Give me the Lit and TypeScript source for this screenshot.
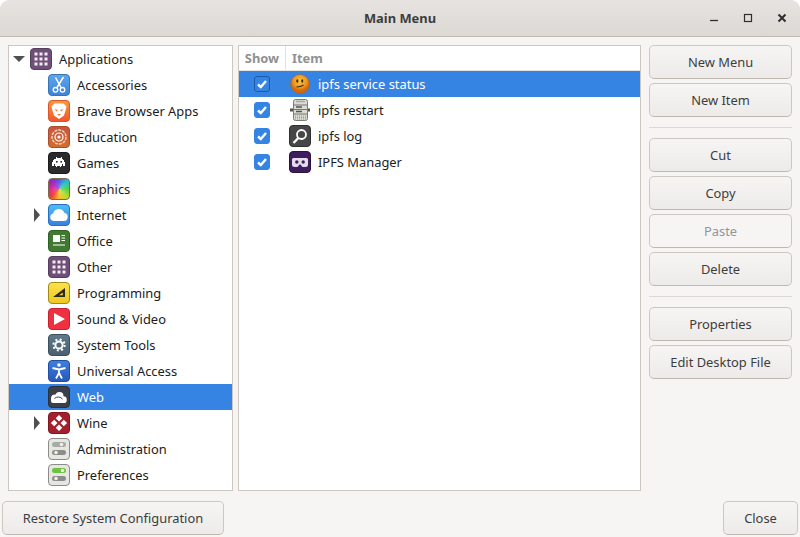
import {LitElement, html, css, svg} from 'lit';
import {customElement} from 'lit/decorators.js';

const grid = (fill: string) => {
  const cells = [];
  for (const y of [4.5, 9.5, 14.5]) for (const x of [4.5, 9.5, 14.5]) cells.push(svg`<rect x=${x} y=${y} width="3" height="3" fill=${fill}/>`);
  return cells;
};

// rounded tile shared by the category icons
const tile = (fill: string, border: string, inner: unknown) => html`<svg class="icon" viewBox="0 0 22 22">
  <rect x=".5" y=".5" width="21" height="21" rx="3.5" fill=${fill} stroke=${border}/>
  ${inner}
</svg>`;

const icons: Record<string, unknown> = {
  applications: tile('#6f4e78', '#54405c', grid('#f2edf3')),
  accessories: tile('url(#acc)', '#3a74b4', svg`
    <path d="M15.500 3 9 13.500M7.500 3.500 13 13.500" stroke="#fff" stroke-width="1.500" fill="none"/>
    <circle cx="7.500" cy="15.800" r="2.300" fill="none" stroke="#fff" stroke-width="1.300"/>
    <circle cx="14.500" cy="15.800" r="2.300" fill="none" stroke="#fff" stroke-width="1.300"/>`),
  brave: tile('url(#brv)', '#d9572a', svg`
    <path d="M6.500 3.500h9l3 3-1 4-1.500 5L11 19l-5-3.500-1.500-5-1-4z" fill="#fff"/>
    <path d="M6.500 9 10 10 8.500 11.500zM15.500 9 12 10l1.500 1.500zM9 14h4l-2 2z" fill="#f47a3a"/>`),
  education: tile('url(#edu)', '#a84f2c', svg`
    <circle cx="11" cy="11" r="7" fill="none" stroke="#f5d9cc" stroke-width="1.400" stroke-dasharray="3 1"/>
    <circle cx="11" cy="11" r="4" fill="none" stroke="#fff" stroke-width="1.200"/>
    <circle cx="11" cy="11" r="1.600" fill="#fff"/>`),
  games: tile('#2b2b2b', '#1c1c1c', svg`
    <path d="M8 5h1v1h4V5h1v2h1v1h1v2h1v4h-2v-2h-1v2h-1v1h-1v-1H9v1H8v-1H7v-2H6v2H4v-4h1V8h1V7h2z" fill="#fff"/>
    <rect x="8" y="9" width="1.600" height="1.600" fill="#2b2b2b"/><rect x="12.400" y="9" width="1.600" height="1.600" fill="#2b2b2b"/>`),
  graphics: html`<div class="icon graphics"></div>`,
  internet: tile('url(#net)', '#2a6fc4', svg`
    <path d="M6 17a3.800 3.800 0 0 1-.8-7.500 5.800 5.800 0 0 1 11-.8A4.200 4.200 0 0 1 16 17z" fill="#fff"/>`),
  office: tile('#3f7a30', '#2f5f24', svg`
    <rect x="5" y="5" width="7" height="7" fill="#fff"/>
    <path d="M13.500 5.500H17M13.500 8H17M13.500 10.500H17M5 15h12" stroke="#fff" stroke-width="1.200"/>`),
  other: tile('#6f4e78', '#54405c', grid('#f2edf3')),
  programming: tile('url(#prg)', '#a08a18', svg`
    <path d="M17 6v9H5z M14.800 10.600 11 13.200h3.800z" fill="#2b2a20" fill-rule="evenodd"/>`),
  sound: tile('#ee3040', '#c5222f', svg`<path d="M6 5 17 11 6 17z" fill="#fff"/>`),
  system: tile('url(#sys)', '#3d4f5c', svg`
    <circle cx="11" cy="11" r="3.600" fill="none" stroke="#fff" stroke-width="2"/>
    <circle cx="11" cy="11" r="5.600" fill="none" stroke="#fff" stroke-width="2" stroke-dasharray="2 2.400"/>`),
  universal: tile('url(#uni)', '#1f4fa0', svg`
    <circle cx="11" cy="5" r="1.800" fill="#fff"/>
    <path d="M4.500 8 11 9.500 17.500 8M11 9.500v3.500M11 13l-3 5.500M11 13l3 5.500" stroke="#fff" stroke-width="1.800" fill="none"/>`),
  web: tile('#3a3f4a', '#2c3038', svg`
    <circle cx="7" cy="12.500" r="4" fill="#fff"/>
    <circle cx="11.500" cy="10" r="4" fill="#fff"/>
    <circle cx="15.500" cy="13.500" r="3.200" fill="#fff"/>
    <rect x="3" y="13" width="15.500" height="4" rx="2" fill="#fff"/>
    <path d="M6.500 12.500a5.500 5.500 0 0 1 8 .5" stroke="#3a3f4a" fill="none"/>`),
  wine: tile('#a3202c', '#7f1822', svg`
    <path d="M11 3 14.300 6.300 11 9.600 7.700 6.300zM6.200 7.700 9.500 11 6.200 14.300 2.900 11zM15.800 7.700 19.100 11 15.800 14.300 12.500 11zM11 12.400 14.300 15.700 11 19 7.700 15.700z" fill="#fff"/>`),
  admin: tile('#e6e6e3', '#8c8c88', svg`
    <rect x="4" y="4" width="14" height="5" rx="2.500" fill="#a9a9a6"/><circle cx="13.500" cy="6.500" r="1.800" fill="#eee"/>
    <rect x="4" y="12" width="14" height="5" rx="2.500" fill="#8c8c89"/><circle cx="8" cy="14.500" r="1.800" fill="#eee"/>`),
  prefs: tile('#e6e6e3', '#8c8c88', svg`
    <rect x="4" y="4" width="14" height="5" rx="2.500" fill="#6cc23a"/><circle cx="14.500" cy="6.500" r="1.800" fill="#eee"/>
    <rect x="4" y="12" width="14" height="5" rx="2.500" fill="#8c8c89"/><circle cx="8" cy="14.500" r="1.800" fill="#eee"/>`),
  smiley: html`<svg class="icon" viewBox="0 0 22 22">
    <circle cx="11" cy="11" r="9.500" fill="url(#smi)" stroke="#a85c10" stroke-width=".5"/>
    <ellipse cx="8.300" cy="8" rx="1.100" ry="1.700" fill="#3a2a10"/><ellipse cx="13.200" cy="8" rx="1.100" ry="1.700" fill="#3a2a10"/>
    <path d="M7.500 14c2.500 0 5-.6 7-2" stroke="#3a2a10" stroke-width="1.100" fill="none"/>
  </svg>`,
  server: html`<svg class="icon" viewBox="0 0 22 22">
    <path d="M1 11h20" stroke="#55554f" stroke-width="3"/>
    <rect x="4.500" y=".5" width="14" height="21" rx="2" fill="#dcdcd6" stroke="#7c7c76"/>
    <path d="M5 6h13M5 10.500h13M5 15h13" stroke="#77776f"/>
    <path d="M7 2.500h9" stroke="#a8a8a2" stroke-width="1.500"/>
    <path d="M7 8h6M7 12.500h6" stroke="#55554f" stroke-width="1.400"/>
    <path d="M6 17h11M6 18.500h11M6 20h11" stroke="#9a9a94" stroke-dasharray="1 1"/>
  </svg>`,
  log: tile('#474747', '#2f2f2f', svg`
    <circle cx="12.500" cy="9.500" r="4.500" fill="none" stroke="#fff" stroke-width="1.800"/>
    <path d="M9.300 13 4.500 18" stroke="#fff" stroke-width="2.400"/>`),
  manager: tile('#3d1d5c', '#2b1342', svg`
    <path d="M4.500 7h13a1.500 1.500 0 0 1 1.500 1.500v5a2.500 2.500 0 0 1-2.500 2.500h-3l-2-2.500h-1l-2 2.500h-3A2.500 2.500 0 0 1 3 13.500v-5A1.500 1.500 0 0 1 4.500 7z" fill="#e4dcec"/>
    <circle cx="7.800" cy="11" r="1.700" fill="#3d1d5c"/><circle cx="14.200" cy="11" r="1.700" fill="#3d1d5c"/>`),
};

const tree = [
  {name: 'Applications', icon: 'applications', top: true, open: true},
  {name: 'Accessories', icon: 'accessories'},
  {name: 'Brave Browser Apps', icon: 'brave'},
  {name: 'Education', icon: 'education'},
  {name: 'Games', icon: 'games'},
  {name: 'Graphics', icon: 'graphics'},
  {name: 'Internet', icon: 'internet', closed: true},
  {name: 'Office', icon: 'office'},
  {name: 'Other', icon: 'other'},
  {name: 'Programming', icon: 'programming'},
  {name: 'Sound & Video', icon: 'sound'},
  {name: 'System Tools', icon: 'system'},
  {name: 'Universal Access', icon: 'universal'},
  {name: 'Web', icon: 'web', selected: true},
  {name: 'Wine', icon: 'wine', closed: true},
  {name: 'Administration', icon: 'admin'},
  {name: 'Preferences', icon: 'prefs'},
];

const items = [
  {name: 'ipfs service status', icon: 'smiley', selected: true},
  {name: 'ipfs restart', icon: 'server'},
  {name: 'ipfs log', icon: 'log'},
  {name: 'IPFS Manager', icon: 'manager'},
];

@customElement('app-root')
export class AppRoot extends LitElement {
  static styles = css`
    :host {
      display: block;
      width: 800px;
      height: 537px;
      overflow: hidden;
      background: #ffffff;
      font-family: "Noto Sans", sans-serif;
      font-size: 12.9px;
      color: #1c1c1c;
    }
    .window {
      height: 537px;
      display: flex;
      flex-direction: column;
      box-sizing: border-box;
      background: #f6f5f4;
      border-radius: 9px 9px 0 0;
      overflow: hidden;
    }
    .titlebar {
      flex: none;
      height: 37px;
      box-sizing: border-box;
      border-bottom: 1px solid #c0b9b0;
      background: linear-gradient(#e6e3e0, #dcd9d5);
      display: grid;
      grid-template-columns: 1fr auto 1fr;
      align-items: center;
    }
    .title {
      grid-column: 2;
      font-weight: 700;
      color: #3d3d3d;
    }
    .controls {
      grid-column: 3;
      justify-self: end;
      display: flex;
      align-items: center;
      gap: 18px;
      padding-right: 10px;
    }
    .controls svg {
      display: block;
      width: 16px;
      height: 16px;
    }
    .body {
      flex: none;
      height: 446px;
      margin-top: 8px;
      display: flex;
      padding: 0 8px;
    }
    .tree, .list {
      box-sizing: border-box;
      height: 446px;
      border: 1px solid #cdc7c2;
      background: #ffffff;
    }
    .tree {
      flex: none;
      width: 225px;
    }
    .handle {
      flex: none;
      width: 5px;
    }
    .list {
      flex: none;
      width: 403px;
    }
    .row {
      height: 26px;
      display: flex;
      align-items: center;
    }
    .row.selected {
      background: #3584e4;
      color: #ffffff;
    }
    .arrow {
      flex: none;
      width: 0;
      height: 0;
    }
    .tree-row {
      padding-left: 39px;
    }
    .tree-row.top {
      padding-left: 21px;
    }
    .expander {
      flex: none;
      width: 12px;
      margin-left: -17px;
      margin-right: 5px;
      display: flex;
      justify-content: center;
    }
    .arrow.open {
      border-left: 6px solid transparent;
      border-right: 6px solid transparent;
      border-top: 6px solid #505050;
    }
    .arrow.closed {
      border-top: 7px solid transparent;
      border-bottom: 7px solid transparent;
      border-left: 6px solid #505050;
    }
    .icon {
      flex: none;
      display: block;
      width: 22px;
      height: 22px;
    }
    .graphics {
      box-sizing: border-box;
      border: 1px solid #7a6a50;
      border-radius: 4px;
      background:
        radial-gradient(circle, rgba(255, 255, 255, 0.25), rgba(255, 255, 255, 0) 70%),
        conic-gradient(#5050e0, #20c0d0 45deg, #50d040 90deg, #b8dc30 135deg, #f8c020 180deg, #f04030 225deg, #e02090 270deg, #a020c0 315deg, #5050e0);
    }
    .label {
      margin-left: 7px;
      white-space: nowrap;
    }
    .header {
      height: 24px;
      display: flex;
      align-items: center;
      font-weight: 700;
      color: #919191;
      border-bottom: 1px solid #e4e1de;
    }
    .header span {
      height: 24px;
      line-height: 24px;
      box-sizing: border-box;
    }
    .col-show {
      width: 47px;
      text-align: center;
      border-right: 1px solid #e4e1de;
    }
    .col-item {
      padding-left: 6px;
    }
    .list-row .check {
      flex: none;
      box-sizing: border-box;
      width: 16px;
      height: 16px;
      margin: 0 19px 0 15px;
      border-radius: 3px;
      background: #3584e4;
      border: 1px solid #3584e4;
      display: flex;
      align-items: center;
      justify-content: center;
    }
    .list-row.selected .check {
      border-color: #1c5bab;
    }
    .check svg {
      display: block;
      flex: none;
      width: 14px;
      height: 14px;
    }
    .side {
      flex: none;
      width: 143px;
      margin-left: 8px;
      display: flex;
      flex-direction: column;
      gap: 4px;
    }
    .sep {
      height: 1px;
      background: #dcd8d4;
      margin: 6px 0;
    }
    .btn {
      box-sizing: border-box;
      height: 34px;
      display: flex;
      align-items: center;
      justify-content: center;
      border: 1px solid #cdc7c2;
      border-bottom-color: #bfb8b1;
      border-radius: 5px;
      background: linear-gradient(#f6f5f4, #edebe9);
      color: #3d3d3d;
      white-space: nowrap;
    }
    .btn.disabled {
      background: #f6f5f4;
      color: #929595;
    }
    .footer {
      flex: 1;
      display: flex;
      justify-content: space-between;
      align-items: flex-end;
      padding: 0 2px 2px;
    }
    .restore {
      width: 222px;
    }
    .close {
      width: 75px;
    }
    .defs {
      position: absolute;
      width: 0;
      height: 0;
    }
  `;

  renderDefs() {
    return html`<svg class="defs">
      <defs>
        <linearGradient id="acc" x2="0" y2="1"><stop stop-color="#5ea6ee"/><stop offset="1" stop-color="#3d83d8"/></linearGradient>
        <linearGradient id="brv" x2="0" y2="1"><stop stop-color="#f99a3a"/><stop offset="1" stop-color="#f0562c"/></linearGradient>
        <linearGradient id="edu" x2="0" y2="1"><stop stop-color="#c9543f"/><stop offset="1" stop-color="#d2702a"/></linearGradient>
        <linearGradient id="net" x2="0" y2="1"><stop stop-color="#4cc0f2"/><stop offset="1" stop-color="#3a7fe0"/></linearGradient>
        <linearGradient id="prg" x2="0" y2="1"><stop stop-color="#fbe24a"/><stop offset="1" stop-color="#f0c820"/></linearGradient>
        <linearGradient id="sys" x2="0" y2="1"><stop stop-color="#5f7a8c"/><stop offset="1" stop-color="#4a6070"/></linearGradient>
        <linearGradient id="uni" x2="0" y2="1"><stop stop-color="#3f7fe0"/><stop offset="1" stop-color="#2858b8"/></linearGradient>
        <radialGradient id="smi" cy=".35"><stop stop-color="#fbc83a"/><stop offset=".7" stop-color="#ee9420"/><stop offset="1" stop-color="#d06a10"/></radialGradient>
      </defs>
    </svg>`;
  }

  renderTreeRow(row: (typeof tree)[number]) {
    const cls = `row tree-row${row.top ? ' top' : ''}${row.selected ? ' selected' : ''}`;
    return html`<div class=${cls}>
      ${row.open || row.closed
        ? html`<div class="expander"><div class="arrow ${row.open ? 'open' : 'closed'}"></div></div>`
        : ''}
      ${icons[row.icon]}
      <span class="label">${row.name}</span>
    </div>`;
  }

  renderItemRow(row: (typeof items)[number]) {
    return html`<div class="row list-row ${row.selected ? 'selected' : ''}">
      <div class="check">
        <svg viewBox="0 0 14 14"><path d="M3 7.500 5.800 10 11 4" stroke="#fff" stroke-width="2.400" fill="none"/></svg>
      </div>
      ${icons[row.icon]}
      <span class="label">${row.name}</span>
    </div>`;
  }

  render() {
    return html`
      ${this.renderDefs()}
      <div class="window">
        <div class="titlebar">
          <div class="title">Main Menu</div>
          <div class="controls">
            <svg viewBox="0 0 16 16"><path d="M4 10.500h8" stroke="#2e2e2e" stroke-width="1.300"/></svg>
            <svg viewBox="0 0 16 16"><rect x="4.500" y="4.500" width="7" height="7" fill="none" stroke="#2e2e2e" stroke-width="1.200"/></svg>
            <svg viewBox="0 0 16 16"><path d="M4.500 4.500l7 7M11.500 4.500l-7 7" stroke="#2e2e2e" stroke-width="2"/></svg>
          </div>
        </div>
        <div class="body">
          <div class="tree">${tree.map((row) => this.renderTreeRow(row))}</div>
          <div class="handle"></div>
          <div class="list">
            <div class="header"><span class="col-show">Show</span><span class="col-item">Item</span></div>
            ${items.map((row) => this.renderItemRow(row))}
          </div>
          <div class="side">
            <div class="btn">New Menu</div>
            <div class="btn">New Item</div>
            <div class="sep"></div>
            <div class="btn">Cut</div>
            <div class="btn">Copy</div>
            <div class="btn disabled">Paste</div>
            <div class="btn">Delete</div>
            <div class="sep"></div>
            <div class="btn">Properties</div>
            <div class="btn">Edit Desktop File</div>
          </div>
        </div>
        <div class="footer">
          <div class="btn restore">Restore System Configuration</div>
          <div class="btn close">Close</div>
        </div>
      </div>
    `;
  }
}
